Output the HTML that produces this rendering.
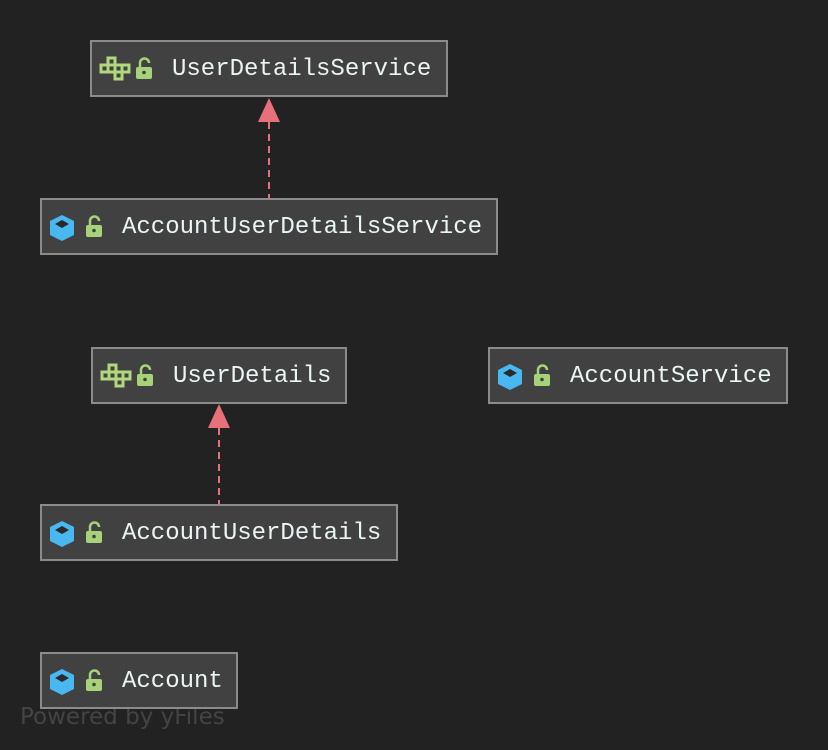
<html><head><style>
body{margin:0;width:828px;height:750px;background:#222222;position:relative;overflow:hidden;font-family:"Liberation Mono",monospace}
.b{position:absolute;box-sizing:border-box;height:57px;background:#414141;border:2px solid #8b8b8b}
.t{position:absolute;left:80px;top:14px;font-size:24px;color:#eaf6f4;line-height:28px;white-space:pre}
.i{position:absolute;left:7px;top:14px}
.l{position:absolute;left:43px;top:15px}
.p{position:absolute;left:20px;top:704px;font-family:"DejaVu Sans",sans-serif;font-size:23px;color:#444444}
</style></head><body>
<svg width="0" height="0" style="position:absolute"><defs>
<g id="if"><g fill="none" stroke="#b1d87c" stroke-width="3"><rect x="2" y="9" width="7" height="7"/><rect x="9" y="9" width="7" height="7"/><rect x="16" y="9" width="7" height="7"/><rect x="23" y="9" width="7" height="7"/><rect x="9" y="2" width="7" height="7"/><rect x="16" y="16" width="7" height="7"/></g></g>
<g id="cl"><path d="M13 1 L25 7 L25 21 L13 27 L1 21 L1 7Z" fill="#4ab8f0"/><path d="M13 6 L20 10 L13 14 L6 10Z" fill="#2a2a2a"/></g>
<g id="lk"><path d="M5 10 V6 a4.5 4.5 0 0 1 9 0" fill="none" stroke="#a6d27a" stroke-width="2.5"/><rect x="1" y="10" width="16" height="12" rx="2" fill="#a6d27a"/><circle cx="9" cy="15.5" r="1.8" fill="#414141"/></g>
</defs></svg>
<svg style="position:absolute;left:0;top:0" width="828" height="750">
<line x1="269" y1="122" x2="269" y2="198" stroke="#e8707a" stroke-width="2" stroke-dasharray="7,5"/>
<path d="M258 122 L280 122 L269 98Z" fill="#e8707a"/>
<line x1="219" y1="428" x2="219" y2="504" stroke="#e8707a" stroke-width="2" stroke-dasharray="7,5"/>
<path d="M208 428 L230 428 L219 404Z" fill="#e8707a"/>
</svg>
<div class="p">Powered by yFiles</div>
<div class="b" style="left:90px;top:40px;width:358px"><svg class="i" width="32" height="26"><use href="#if"/></svg><svg class="l" width="18" height="24"><use href="#lk"/></svg><div class="t">UserDetailsService</div></div>
<div class="b" style="left:40px;top:198px;width:458px"><svg class="i" width="26" height="28"><use href="#cl"/></svg><svg class="l" width="18" height="24"><use href="#lk"/></svg><div class="t">AccountUserDetailsService</div></div>
<div class="b" style="left:91px;top:347px;width:256px"><svg class="i" width="32" height="26"><use href="#if"/></svg><svg class="l" width="18" height="24"><use href="#lk"/></svg><div class="t">UserDetails</div></div>
<div class="b" style="left:488px;top:347px;width:300px"><svg class="i" width="26" height="28"><use href="#cl"/></svg><svg class="l" width="18" height="24"><use href="#lk"/></svg><div class="t">AccountService</div></div>
<div class="b" style="left:40px;top:504px;width:358px"><svg class="i" width="26" height="28"><use href="#cl"/></svg><svg class="l" width="18" height="24"><use href="#lk"/></svg><div class="t">AccountUserDetails</div></div>
<div class="b" style="left:40px;top:652px;width:198px"><svg class="i" width="26" height="28"><use href="#cl"/></svg><svg class="l" width="18" height="24"><use href="#lk"/></svg><div class="t">Account</div></div>
</body></html>
